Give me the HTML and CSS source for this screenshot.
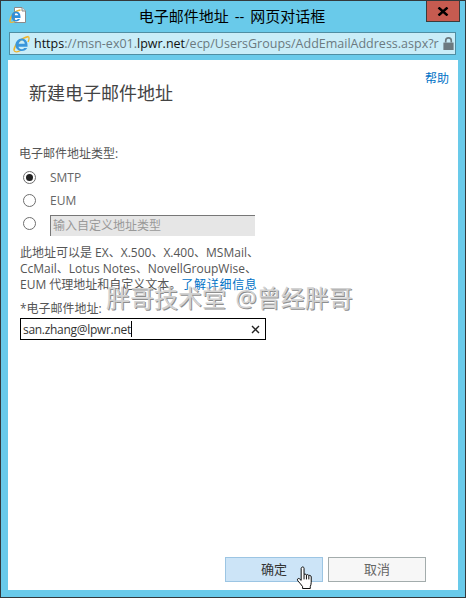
FILE: index.html
```html
<!DOCTYPE html>
<html>
<head>
    <meta charset="utf-8">
    <title>电子邮件地址 -- 网页对话框</title>
    <link rel="stylesheet" href="styles.css">
</head>
<body>
    <div class="window">
        <div class="titlebar">
            <svg class="page-icon" width="17" height="17" viewBox="0 0 17 17">
                <path d="M5.500 .5H13L16.500 4V15.500H5.500Z" fill="#fff" stroke="#8a8a8a"/>
                <path d="M13 .5V4H16.500" fill="#e4e4e4" stroke="#8a8a8a"/>
                <path d="M.8 14.500C1 9 6 3.500 11.500 3" fill="none" stroke="#f2b632" stroke-width="1.600"/>
                <path d="M.8 14.500C1.500 16 4 15.500 6 14.300" fill="none" stroke="#f2b632" stroke-width="1.200"/>
                <path d="M2.500 9.500H11.500C11.500 6.300 9.500 4.500 7 4.500C4.300 4.500 2.500 6.800 2.500 9.500C2.500 12.200 4.300 14.500 7 14.500C8.900 14.500 10.300 13.500 11 12H8.800C8.400 12.600 7.800 12.900 7 12.900C5.800 12.900 4.900 12.200 4.700 11H11.500V9.500H4.700C4.900 7.800 5.800 6.200 7 6.200C8.200 6.200 9.200 7.200 9.300 8.300H4.700" fill="#2f8fdc"/>
            </svg>
            <div class="title">电子邮件地址 -- 网页对话框</div>
            <div class="close">
                <svg width="12" height="9" viewBox="0 0 12 9">
                    <path d="M1.500 .500L10.500 8.500M10.500 .500L1.500 8.500" stroke="#000" stroke-width="2.400"/>
                </svg>
            </div>
        </div>
        <div class="addressbar">
            <svg class="ie-icon" width="17" height="18" viewBox="0 0 17 18">
                <path d="M1 15.500C1.500 9 8 3 15.500 1.500" fill="none" stroke="#f0b429" stroke-width="1.600"/>
                <path d="M15.500 1.500C16.500 3 16 5 15 7M1 15.500C2 17.500 5 17 7.500 15.500" fill="none" stroke="#f0b429" stroke-width="1.300"/>
                <path d="M2.500 10H14.500C14.500 6 12 3.500 8.800 3.500C5.200 3.500 2.500 6.500 2.500 10C2.500 13.500 5.200 16 8.800 16C11.200 16 13.200 14.800 14.200 13H11.200C10.600 13.800 9.800 14.200 8.800 14.200C7 14.200 5.800 13.200 5.500 11.700H14.500V10H5.500C5.800 7.200 7.200 5.500 8.800 5.500C10.400 5.500 11.700 7 11.800 8.700H5.500" fill="#3a96db"/>
            </svg>
            <div class="url"><b>https</b>://msn-ex01.<b>lpwr.net</b>/ecp/UsersGroups/AddEmailAddress.aspx?r</div>
            <svg class="lock" width="11" height="13" viewBox="0 0 11 14">
                <path d="M2.500 6V4C2.500 2.300 3.800 1 5.500 1C7.200 1 8.500 2.300 8.500 4V6" fill="none" stroke="#6c7a80" stroke-width="1.800"/>
                <rect y="6" width="11" height="8" fill="#6c7a80"/>
            </svg>
        </div>
        <div class="content">
            <div class="header">
                <h1>新建电子邮件地址</h1>
                <a class="link help">帮助</a>
            </div>
            <div class="form">
                <div class="label">电子邮件地址类型:</div>
                <div class="radios">
                    <div class="radio-row"><span class="radio checked"></span><span>SMTP</span></div>
                    <div class="radio-row"><span class="radio"></span><span>EUM</span></div>
                    <div class="radio-row"><span class="radio"></span><div class="custom">输入自定义地址类型</div></div>
                </div>
                <p class="desc">此地址可以是 EX、X.500、X.400、MSMail、<br>CcMail、Lotus Notes、NovellGroupWise、<br>EUM 代理地址和自定义文本。<a class="link more">了解详细信息</a></p>
                <div class="label email-label">*电子邮件地址:</div>
                <div class="email">
                    <span class="email-text">san.zhang@lpwr.net</span><span class="caret"></span>
                    <svg class="clear" width="9" height="9" viewBox="0 0 9 9">
                        <path d="M1 1L8 8M8 1L1 8" stroke="#222" stroke-width="1.400"/>
                    </svg>
                </div>
            </div>
            <div class="buttons">
                <div class="btn hover">确定</div>
                <div class="btn">取消</div>
            </div>
            <div class="watermark">胖哥技术堂 @曾经胖哥</div>
            <svg class="hand" width="18" height="23" viewBox="0 0 18 24">
                <path d="M5.500 1.500C6.500 .5 8 1 8 2.500V9C8.500 8.200 10 8.200 10.500 9.500C11 8.700 12.500 8.800 13 10C13.700 9.500 15.500 9.800 15.500 11.500V17C15.500 19 15 20 14.500 21.500V23.500H6.500V21.500C5 19.500 3.500 17.500 1.500 15.500C.5 14 1.500 12.500 3 13.200L5 15V2.500Z" fill="#fff" stroke="#000" stroke-linejoin="round"/>
                <path d="M8 9V14M10.500 9.500V14M13 10V14" stroke="#000" fill="none"/>
            </svg>
        </div>
    </div>
</body>
</html>
```

FILE: styles.css
```css
* {
    box-sizing: border-box;
}
html, body {
    margin: 0;
    padding: 0;
}
body {
    width: 466px;
    height: 598px;
    overflow: hidden;
    font-family: "Open Sans", "Noto Sans CJK SC", sans-serif;
    font-size: 12px;
    color: #333;
}
.window {
    height: 598px;
    display: flex;
    flex-direction: column;
    background-color: #69caea;
    border: 1px solid #34393c;
    padding: 0 7px 7px 7px;
}
.titlebar {
    height: 31px;
    display: flex;
    align-items: flex-start;
    position: relative;
}
.page-icon {
    margin: 6px 0 0 1px;
}
.title {
    position: absolute;
    left: 0;
    right: 2px;
    top: 5px;
    text-align: center;
    font-size: 15px;
    line-height: 21px;
    word-spacing: 2px;
    color: #000;
}
.close {
    position: absolute;
    right: -2px;
    top: 0;
    width: 34px;
    height: 21px;
    display: flex;
    align-items: center;
    justify-content: center;
    background-color: #c65b50;
    border: 1px solid #3b3b3b;
    border-top: none;
}
.addressbar {
    height: 23px;
    margin: 0 2px 5px 1px;
    display: flex;
    align-items: center;
    background-color: #c9edf8;
    border: 1px solid #4f8ea3;
    padding: 0 1px 0 3px;
}
.ie-icon {
    flex: none;
}
.url {
    flex: 1;
    margin-left: 4px;
    font-size: 12.500px;
    white-space: nowrap;
    overflow: hidden;
    color: #6b7a80;
}
.url b {
    font-weight: normal;
    color: #111;
}
.lock {
    flex: none;
}
.content {
    flex: 1;
    position: relative;
    display: flex;
    flex-direction: column;
    background-color: #fff;
}
.header {
    display: flex;
    justify-content: space-between;
}
h1 {
    margin: 0;
    padding: 21px 0 0 21px;
    font-size: 18px;
    line-height: 24px;
    font-weight: normal;
    color: #444;
}
.link {
    color: #0072c6;
}
.help {
    padding: 11px 9px 0 0;
    line-height: 16px;
}
.more {
    letter-spacing: 0.700px;
}
.form {
    padding: 41px 0 0 11px;
}
.label {
    line-height: 16px;
    color: #555;
}
.radios {
    margin-top: 4px;
}
.radio-row {
    height: 23px;
    display: flex;
    align-items: center;
    color: #666;
    padding-left: 4px;
}
.radio {
    width: 13px;
    height: 13px;
    margin-right: 14px;
    border: 1px solid #6e6e6e;
    border-radius: 50%;
    display: flex;
    align-items: center;
    justify-content: center;
    flex: none;
}
.radio.checked::after {
    content: "";
    width: 7px;
    height: 7px;
    border-radius: 50%;
    background-color: #222;
}
.custom {
    width: 205px;
    height: 21px;
    align-self: flex-start;
    margin-top: 3px;
    padding-left: 2px;
    line-height: 19px;
    color: #999;
    background-color: #e6e6e6;
    border-top: 1px solid #777;
    border-left: 1px solid #777;
}
.desc {
    margin: 10px 0 0 1px;
    line-height: 16px;
    color: #555;
}
.email-label {
    margin-top: 8px;
    padding-left: 1px;
}
.email {
    width: 246px;
    height: 22px;
    margin: 1px 0 0 1px;
    padding: 0 5px 0 2px;
    display: flex;
    align-items: center;
    border: 1px solid #000;
    color: #333;
}
.email-text {
    letter-spacing: -0.300px;
}
.caret {
    width: 1px;
    height: 16px;
    background-color: #000;
}
.clear {
    margin-left: auto;
}
.buttons {
    margin-top: auto;
    display: flex;
    justify-content: flex-end;
    gap: 5px;
    padding: 0 32px 8px 0;
}
.btn {
    width: 98px;
    height: 25px;
    font-size: 13px;
    line-height: 22px;
    text-align: center;
    color: #666;
    background-color: #f7f7f7;
    border: 1px solid #a3acac;
}
.btn.hover {
    color: #333;
    background-color: #cce4f7;
    border-color: #9cc5e3;
}
.watermark {
    position: absolute;
    left: 98px;
    top: 226px;
    font-size: 24px;
    line-height: 24px;
    word-spacing: 3px;
    white-space: nowrap;
    color: #d2d2d2;
    text-shadow: 1px 1px 0 #8e8e8e;
}
.hand {
    position: absolute;
    left: 288px;
    top: 506px;
}
```
